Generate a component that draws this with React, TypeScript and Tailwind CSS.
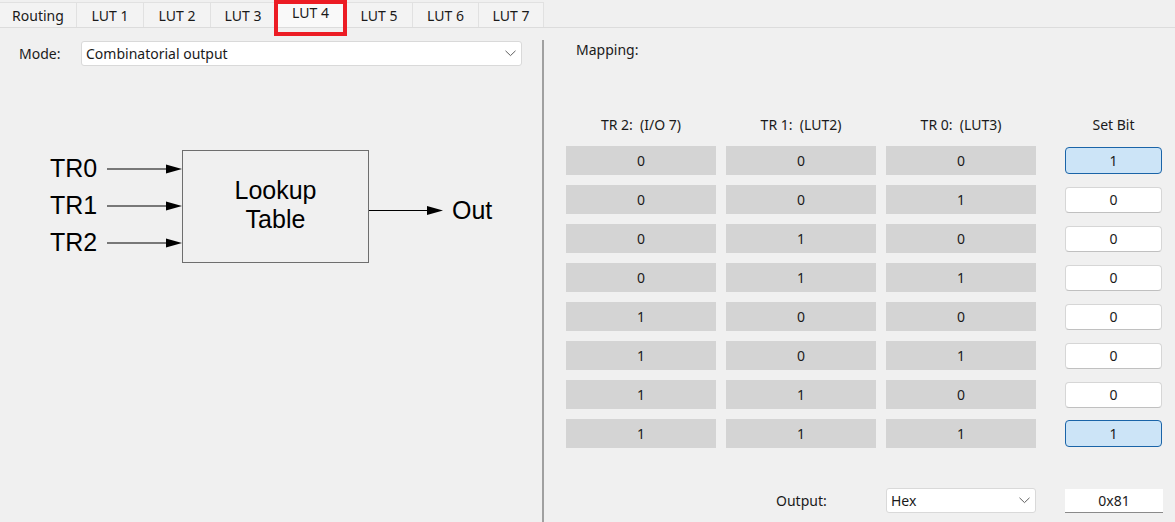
import React from "react";

const tabs = ["Routing", "LUT 1", "LUT 2", "LUT 3", "LUT 4", "LUT 5", "LUT 6", "LUT 7"];
const tabW = [77, 67, 67, 65, 70, 67, 66, 65];

const rows = [
  [0, 0, 0, 1],
  [0, 0, 1, 0],
  [0, 1, 0, 0],
  [0, 1, 1, 0],
  [1, 0, 0, 0],
  [1, 0, 1, 0],
  [1, 1, 0, 0],
  [1, 1, 1, 1],
];

function Chevron() {
  return (
    <svg width="11" height="7" viewBox="0 0 11 7" className="shrink-0">
      <path d="M0.5 0.8 L5.5 5.6 L10.5 0.8" fill="none" stroke="#5f5f5f" strokeWidth="1" />
    </svg>
  );
}

function Diagram() {
  const arrow = (y: number) => (
    <g key={y}>
      <line x1="107" y1={y} x2="170" y2={y} stroke="#000" strokeWidth="1" />
      <polygon points={`166,${y - 4.5} 182,${y} 166,${y + 4.5}`} fill="#000" />
    </g>
  );
  return (
    <svg width="543" height="150" viewBox="0 140 543 150" className="block">
      <text x="50" y="177" fontFamily="'Liberation Sans', Arial, sans-serif" fontSize="25" fill="#000">TR0</text>
      <text x="50" y="214" fontFamily="'Liberation Sans', Arial, sans-serif" fontSize="25" fill="#000">TR1</text>
      <text x="50" y="251" fontFamily="'Liberation Sans', Arial, sans-serif" fontSize="25" fill="#000">TR2</text>
      {arrow(169)}
      {arrow(206)}
      {arrow(243)}
      <rect x="182.5" y="150.5" width="186" height="112" fill="none" stroke="#6e6e6e" strokeWidth="1" />
      <text x="275.5" y="199" textAnchor="middle" fontFamily="'Liberation Sans', Arial, sans-serif" fontSize="25" fill="#000">Lookup</text>
      <text x="275.5" y="228" textAnchor="middle" fontFamily="'Liberation Sans', Arial, sans-serif" fontSize="25" fill="#000">Table</text>
      <line x1="369" y1="210.5" x2="430" y2="210.5" stroke="#000" strokeWidth="1" />
      <polygon points="427,206 443,210.5 427,215" fill="#000" />
      <text x="452" y="219" fontFamily="'Liberation Sans', Arial, sans-serif" fontSize="25" fill="#000">Out</text>
    </svg>
  );
}

export default function App() {
  return (
    <div
      className="relative w-[1175px] h-[522px] overflow-hidden bg-[#f0f0f0] text-[14px] text-[#1a1a1a] flex flex-col"
      style={{ fontFamily: "'Noto Sans', 'Open Sans', sans-serif" }}
    >
      {/* Tab strip */}
      <div className="h-[28px] flex items-end border-b border-[#dcdcdc] shrink-0">
        {tabs.map((t, i) => (
          <div
            key={t}
            style={{ width: tabW[i] }}
            className={
              i === 4
                ? "h-[28px] flex items-center justify-center bg-[#f9f9f9] border-r border-[#dcdcdc] pb-[2px]"
                : "h-[25px] flex items-center justify-center bg-[#f3f3f3] border-r border-t border-[#e1e1e1]"
            }
          >
            {t}
          </div>
        ))}
      </div>
      {/* red highlight */}
      <div className="absolute left-[274px] top-0 w-[73px] h-[36px] border-[4px] border-[#ec1c24]" />

      <div className="flex flex-1">
        {/* Left panel */}
        <div className="w-[542px] shrink-0 flex flex-col">
          <div className="flex items-center mt-[13px] ml-[19px]">
            <span className="w-[62px]">Mode:</span>
            <div className="w-[441px] h-[25px] bg-white border border-[#d9d9d9] rounded-[3px] flex items-center justify-between pl-[4px] pr-[5px]">
              <span>Combinatorial output</span>
              <Chevron />
            </div>
          </div>
          <div className="mt-[74px]">
            <Diagram />
          </div>
        </div>

        {/* Separator */}
        <div className="w-[2px] mt-[12px] bg-[#a0a0a0] shrink-0" />

        {/* Right panel */}
        <div className="flex-1 flex flex-col pl-[22px]">
          <div className="mt-[12px] ml-[10px] h-[20px] leading-[20px]">Mapping:</div>
          <div className="mt-[54px] flex items-center h-[20px]">
            <div className="w-[150px] text-center">TR 2:&nbsp;&nbsp;(I/O 7)</div>
            <div className="w-[150px] ml-[10px] text-center">TR 1:&nbsp;&nbsp;(LUT2)</div>
            <div className="w-[150px] ml-[10px] text-center">TR 0:&nbsp;&nbsp;(LUT3)</div>
            <div className="w-[97px] ml-[29px] text-center">Set Bit</div>
          </div>
          <div className="mt-[12px] flex flex-col gap-[10px]">
            {rows.map((r, i) => (
              <div key={i} className="flex items-center h-[29px]">
                <div className="w-[150px] h-[29px] bg-[#d4d4d4] flex items-center justify-center">{r[0]}</div>
                <div className="w-[150px] h-[29px] ml-[10px] bg-[#d4d4d4] flex items-center justify-center">{r[1]}</div>
                <div className="w-[150px] h-[29px] ml-[10px] bg-[#d4d4d4] flex items-center justify-center">{r[2]}</div>
                {r[3] === 1 ? (
                  <div className="w-[97px] h-[27px] ml-[29px] rounded-[4px] bg-[#cce4f7] border border-[#1a64a8] flex items-center justify-center">
                    1
                  </div>
                ) : (
                  <div className="w-[97px] h-[26px] ml-[29px] rounded-[4px] bg-white border border-[#d6d6d6] border-b-[#c0c0c0] flex items-center justify-center">
                    0
                  </div>
                )}
              </div>
            ))}
          </div>
          <div className="mt-[40px] flex items-center h-[25px]">
            <span className="ml-[210px] w-[110px]">Output:</span>
            <div className="w-[150px] h-[25px] bg-white border border-[#d9d9d9] rounded-[3px] flex items-center justify-between pl-[4px] pr-[5px]">
              <span>Hex</span>
              <Chevron />
            </div>
            <div className="w-[98px] h-[24px] ml-[29px] bg-white border-b border-[#8a8a8a] flex items-center justify-center">
              0x81
            </div>
          </div>
        </div>
      </div>
    </div>
  );
}
